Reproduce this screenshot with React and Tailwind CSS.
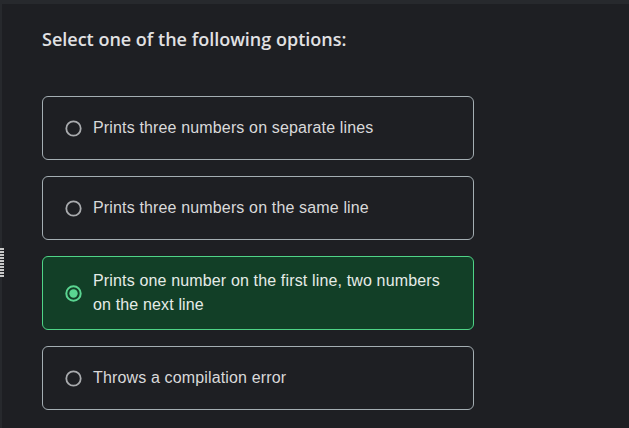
import React, { useState } from 'react';

const options = [
  'Prints three numbers on separate lines',
  'Prints three numbers on the same line',
  'Prints one number on the first line, two numbers on the next line',
  'Throws a compilation error',
];

function Radio({ checked }) {
  return (
    <svg width="17" height="17" viewBox="0 0 17 17" className="shrink-0">
      {checked ? (
        <>
          <circle cx="8.5" cy="8.5" r="7.2" fill="none" stroke="#5ad591" strokeWidth="2" />
          <circle cx="8.5" cy="8.5" r="4.2" fill="#5ad591" />
        </>
      ) : (
        <circle cx="8.5" cy="8.5" r="7.2" fill="none" stroke="#a9abae" strokeWidth="1.8" />
      )}
    </svg>
  );
}

export default function App() {
  const [selected, setSelected] = useState(2);

  return (
    <div className="w-[629px] h-[428px] bg-[#27292d] pt-[4px] pl-[2px] overflow-hidden">
      <div className="relative h-full bg-[#1e1f23] pl-[40px] pt-[22px]">
        <div className="absolute left-[-2px] top-[244px] flex flex-col gap-[1px]">
          {[0, 1, 2, 3, 4, 5, 6, 7, 8, 9].map((i) => (
            <div key={i} className="w-[4px] h-[2px] bg-[#c8c8c8]" />
          ))}
        </div>

        <h2 className="text-[18px] leading-[26px] font-semibold text-[#e1e1e3] font-['Open_Sans',sans-serif]">
          Select one of the following options:
        </h2>

        <div className="mt-[44px] flex flex-col gap-4 w-[432px]">
          {options.map((opt, i) => {
            const active = selected === i;
            return (
              <button
                key={i}
                onClick={() => setSelected(i)}
                className={`flex items-center min-h-[64px] py-3 pl-[22px] pr-6 rounded-[6px] border text-left ${
                  active
                    ? 'bg-[#123f27] border-[#4fd487] text-[#e6ece8]'
                    : 'bg-[#1e1f23] border-[#a4aeb3] text-[#d9d9da]'
                }`}
              >
                <Radio checked={active} />
                <span className="ml-[11px] text-[16px] leading-[24px] tracking-[0.15px] font-['Liberation_Sans',Arial,sans-serif]">
                  {opt}
                </span>
              </button>
            );
          })}
        </div>
      </div>
    </div>
  );
}
